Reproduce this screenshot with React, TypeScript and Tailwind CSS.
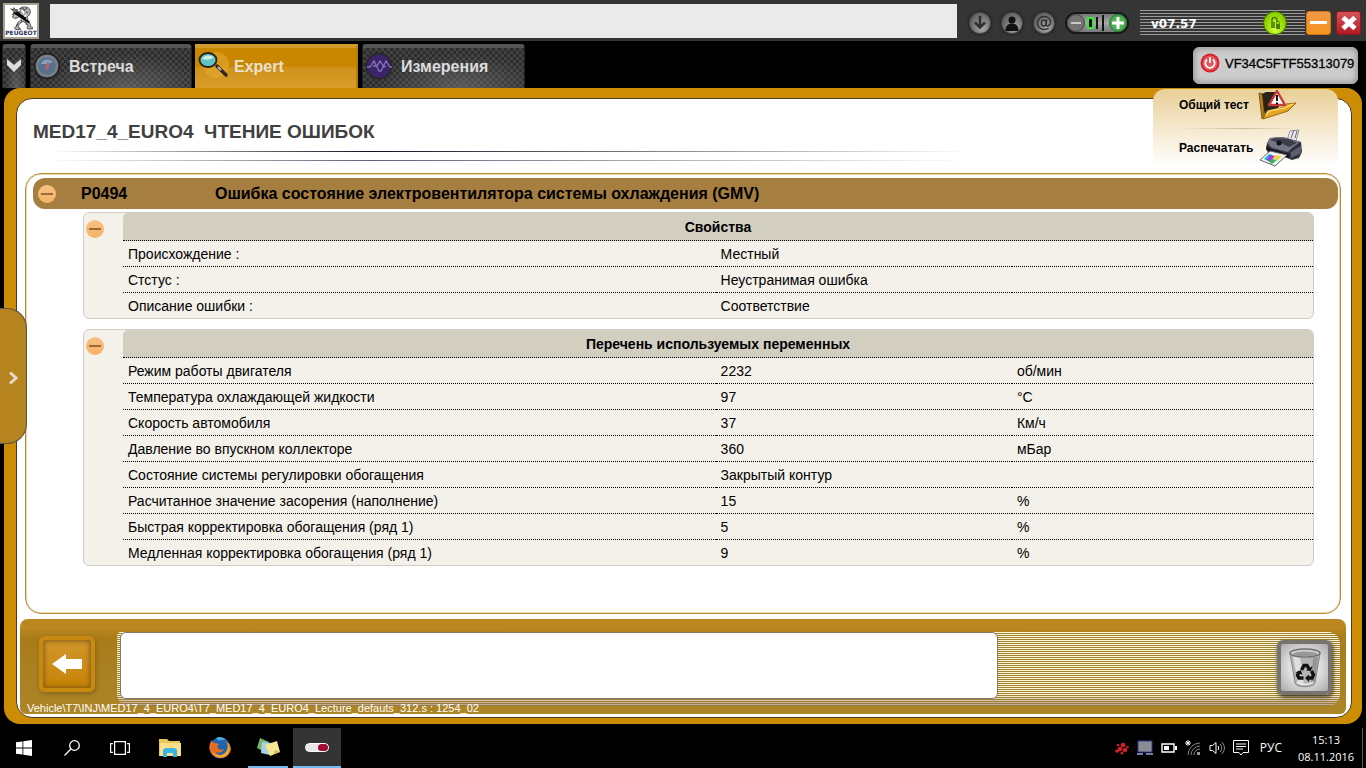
import { useState } from "react";
import type { ReactNode } from "react";

type Row = { name: string; value: string; unit?: string };

const properties: Row[] = [
  { name: "Происхождение :", value: "Местный" },
  { name: "Стстус :", value: "Неустранимая ошибка" },
  { name: "Описание ошибки :", value: "Соответствие" },
];

const variables: Row[] = [
  { name: "Режим работы двигателя", value: "2232", unit: "об/мин" },
  { name: "Температура охлаждающей жидкости", value: "97", unit: "°C" },
  { name: "Скорость автомобиля", value: "37", unit: "Км/ч" },
  { name: "Давление во впускном коллекторе", value: "360", unit: "мБар" },
  { name: "Состояние системы регулировки обогащения", value: "Закрытый контур" },
  { name: "Расчитанное значение засорения (наполнение)", value: "15", unit: "%" },
  { name: "Быстрая корректировка обогащения (ряд 1)", value: "5", unit: "%" },
  { name: "Медленная корректировка обогащения (ряд 1)", value: "9", unit: "%" },
];

function PeugeotLogo() {
  return (
    <div className="flex size-9 shrink-0 flex-col items-center border-2 border-[#a5a294] bg-white">
      <svg viewBox="0 0 44 44" className="mt-px h-6 w-6" aria-hidden="true">
        <path d="M19 6c2-4 8-5 13-4 5 1 8 5 7 10-1 4-3 6-6 8l2 7c3 3 5 6 4 10l4 2v3h-9l-1-3 2-2-3-5-6-4-6 4-3 4 1 4 3 1v2h-9l-2-3 4-3 3-7 5-6-1-6-6 4-5 1-4-3 2-2-2-3 3 1-1-4 4 2-1-4 4 3 6-4 2-5Z" fill="#b4b4b4" stroke="#3a3a3a" strokeWidth="1.500" strokeLinejoin="round" />
        <path d="M8 10 3 5l5 2 1-4 3 4 3-1 1 4 6 3" fill="#777" stroke="#444" strokeWidth="1.500" />
        <path d="m9 12 28 18M13 11l18 12" stroke="#080808" strokeWidth="3.500" />
        <path d="m25 3 3 5 5-4M31 10l4 3M20 22l4 7M30 27l3 8M16 31l-3 7" stroke="#555" strokeWidth="2" fill="none" />
        <path d="m22 8 4 2 1 4M32 17l-4 2M17 27l5-4" stroke="#fff" strokeWidth="2.500" fill="none" />
      </svg>
      <span className="font-['DejaVu_Sans'] text-[6px] leading-[6px] font-bold text-[#27315c]">PEUGEOT</span>
    </div>
  );
}

function RoundButton({ label, children }: { label: string; children: ReactNode }) {
  return (
    <button aria-label={label} className="flex size-[22px] items-center justify-center rounded-full border border-[#4d4d4d] bg-radial-[at_60%_75%] from-[#aaa] via-[#777] to-[#454545] text-[#303030] shadow-[0_0_2px_1px_#222]">
      {children}
    </button>
  );
}

function TopBar() {
  return (
    <header className="flex h-[41px] items-center bg-[#353535] pr-[5px] pl-[3px]">
      <PeugeotLogo />
      <input aria-label="Сообщение" className="ml-[11px] h-[34px] min-w-0 flex-1 bg-[#eaeaea] px-2 outline-none" />
      <div className="ml-3 flex shrink-0 items-center gap-[10px] pt-1">
        <RoundButton label="Загрузка">
          <svg viewBox="0 0 16 16" className="size-4 shrink-0" fill="none" stroke="currentColor" strokeWidth="2.6"><path d="M8 1v12M3 7.500 8 12.500 13 7.500" /></svg>
        </RoundButton>
        <RoundButton label="Пользователь">
          <svg viewBox="0 0 16 16" className="size-4 shrink-0" fill="#111"><circle cx="8" cy="5" r="3.500" /><path d="M1.500 16c0-5 2.500-7.500 6.500-7.500s6.500 2.500 6.500 7.500Z" /></svg>
        </RoundButton>
        <RoundButton label="Почта">
          <svg viewBox="0 0 16 16" className="size-4 shrink-0" fill="none" stroke="currentColor" strokeWidth="1.400"><ellipse cx="7.800" cy="8" rx="2.400" ry="3" /><path d="M10.700 4.500 10 10c0 2 4.500 1 4.500-3 0-3.500-3-5.500-6.500-5.500S1.500 4.500 1.500 8s2.500 6.500 6.500 6.500c2 0 3.500-.5 4.500-1.300" /></svg>
        </RoundButton>
      </div>
      <div className="mt-1 ml-[10px] flex h-[22px] w-16 shrink-0 items-center justify-between rounded-full border-2 border-[#181818] bg-linear-to-b from-[#777] via-[#aaa] to-[#777]">
        <button aria-label="Уменьшить" className="flex size-[18px] shrink-0 items-center justify-center rounded-full border border-[#444] bg-[#737373]"><span className="h-[2px] w-2.5 bg-[#c9c9c9]" /></button>
        <svg viewBox="0 0 20 18" className="h-[18px] w-5 shrink-0" aria-hidden="true"><rect x="1" y="4" width="5" height="10" fill="#111" stroke="#3ee43e" strokeWidth="2" /><path d="M10 3v12M16 1v16" stroke="#111" strokeWidth="2" /></svg>
        <button aria-label="Увеличить" className="flex size-[18px] shrink-0 items-center justify-center rounded-full border border-[#1e7d2c] bg-radial from-[#69c96b] to-[#36933d]"><svg viewBox="0 0 12 12" className="size-3 shrink-0" stroke="#fff" strokeWidth="3"><path d="M6 0v12M0 6h12" /></svg></button>
      </div>
      <div className="mt-1 ml-[11px] flex h-[26px] w-[165px] shrink-0 items-center justify-between bg-[repeating-linear-gradient(#9a9a9a_0_1px,#353535_1px_3px)] pr-[18px] pl-[11px]">
        <span className="pt-0.5 font-['DejaVu_Sans'] text-[12px] font-bold text-white">v07.57</span>
        <button aria-label="Доступ" className="flex size-6 items-center justify-center rounded-full border border-[#3d6e00] bg-radial-[at_50%_75%] from-[#d5ff4c] via-[#9be000] to-[#6dae00]">
          <svg viewBox="0 0 16 16" className="size-4" aria-hidden="true"><path d="M5 7V5a2.500 2.500 0 0 1 5 0v2" fill="none" stroke="#4c7800" strokeWidth="1.500" /><rect x="4" y="7" width="4" height="6" fill="#5a8f00" /><path d="M9 9h4v5H9Z" fill="#507d00" /><path d="M9.700 9V7.500a1.300 1.300 0 0 1 2.600 0V9" fill="none" stroke="#4c7800" /></svg>
        </button>
      </div>
      <button aria-label="Свернуть" className="mt-1 ml-px flex h-6 w-[25px] shrink-0 items-center justify-center rounded-[3px] border border-[#cf7517] bg-linear-to-b from-[#ee9a45] to-[#f7941e]"><span className="h-[3px] w-[17px] bg-white" /></button>
      <button aria-label="Закрыть" className="mt-1 ml-[5px] flex h-6 w-[25px] shrink-0 items-center justify-center rounded-[3px] border border-[#8c1a23] bg-linear-to-b from-[#d75159] to-[#b31621]">
        <svg viewBox="0 0 16 16" className="size-4" stroke="#fff" strokeWidth="4.800"><path d="m2 2.500 12 11M14 2.500 2 13.500" /></svg>
      </button>
    </header>
  );
}

function CarbonTab({ className, children }: { className: string; children: ReactNode }) {
  return (
    <button className={"flex items-center rounded-t-sm border-x border-t-4 border-x-[#222] border-t-[#555] bg-[radial-gradient(ellipse_at_60%_100%,#77777799,transparent_60%),repeating-conic-gradient(#2c2c2c_0_25%,#434343_0_50%)] bg-[size:auto,6px_6px] pb-1 text-[16px] font-bold text-[#dcdcdc] " + className}>
      {children}
    </button>
  );
}

function TabBar() {
  return (
    <nav className="flex h-[47px] items-stretch bg-black pt-[3px] pr-2 pl-0.5">
      <CarbonTab className="w-6 justify-center">
        <svg viewBox="0 0 16 14" className="h-3.5 w-4 shrink-0" aria-label="Список"><path d="M1 0 8 6 15 0V6L8 13 1 6Z" fill="#ddd" /></svg>
      </CarbonTab>
      <CarbonTab className="ml-1 w-[162px] gap-2 pl-0.5">
        <svg viewBox="0 0 28 28" className="size-7" aria-hidden="true"><circle cx="14" cy="14" r="12.500" fill="#343638" stroke="#222" strokeWidth="1.500" /><circle cx="14" cy="14" r="10" fill="#56708d" stroke="#7a8087" strokeWidth="2.500" /><path d="M8 12a7 7 0 0 1 12-2l-5 2Z" fill="#87a1ba" /><path d="m15 9 1.500 5L13 20l-.5-6Z" fill="#b56569" /></svg>
        <span className="pt-0.5 leading-5">Встреча</span>
      </CarbonTab>
      <button className="ml-[3px] flex w-[163px] items-center gap-1 border-t-4 border-r-2 border-t-[#d29a2b] border-r-[#b97d06] bg-linear-to-b from-[#c98700] from-45% via-[#cf921b] via-50% to-[#d89d28] pb-1 pl-[3px] text-[16px] font-bold text-[#e9e0cd]">
        <svg viewBox="0 0 32 30" className="h-[30px] w-8" aria-hidden="true"><circle cx="18" cy="14" r="13" fill="#e5a832" opacity=".6" /><path d="m19 15 9 9" stroke="#302b23" strokeWidth="3.500" strokeLinecap="round" /><path d="m20 16 3 3" stroke="#c3bca6" strokeWidth="2" /><ellipse cx="10" cy="9" rx="8.500" ry="7" fill="#65c2c4" stroke="#29251c" strokeWidth="1.800" /><path d="M4 8c2-4 9-5 12-1-3 0-4 3-12 1Z" fill="#c9f0e5" /></svg>
        <span className="pt-0.5 leading-5">Expert</span>
      </button>
      <CarbonTab className="ml-1 w-[163px] gap-2 pl-0.5">
        <svg viewBox="0 0 28 28" className="size-7" aria-hidden="true"><circle cx="14" cy="14" r="12.500" fill="#3c2268" stroke="#292929" strokeWidth="2" /><path d="m2 15 3 0 4-6 5 10 2 0 5-10 4 6h2M8 14h4l3-5 4 6 2-1" fill="none" stroke="#8177b8" strokeWidth="1.300" /></svg>
        <span className="pt-0.5 leading-5">Измерения</span>
      </CarbonTab>
      <button className="mt-[3px] mb-1 ml-auto flex w-[165px] items-center gap-[5px] rounded-md border border-[#aaa] bg-[#ccc] pb-[5px] pl-1.5 text-[13px] whitespace-nowrap text-black shadow-[inset_0_0_6px_#888]">
        <svg viewBox="0 0 20 20" className="size-5 shrink-0" aria-hidden="true"><circle cx="10" cy="10" r="9.500" fill="#d9222c" /><circle cx="10" cy="10" r="7.500" fill="#e0575d" /><path d="M7 6.500a4.700 4.700 0 1 0 6 0M10 4v6" fill="none" stroke="#fff" strokeWidth="1.700" /></svg>
        <span className="pt-px [-webkit-text-stroke:0.3px_black]">VF34C5FTF55313079</span>
      </button>
    </nav>
  );
}

function Collapse({ open, onToggle, label }: { open: boolean; onToggle: () => void; label: string }) {
  return (
    <button aria-label={label} aria-expanded={open} onClick={onToggle} className="flex size-[18px] shrink-0 items-center justify-center rounded-full bg-linear-to-b from-[#f8c184] to-[#f5b264]">
      <span className="h-[2px] w-3 bg-[#9a6b35]" />
    </button>
  );
}

function DataPanel({ title, rows }: { title: string; rows: Row[] }) {
  const [open, setOpen] = useState(true);
  return (
    <section className="flex rounded-md border border-[#cfcec4] bg-[#f4f1eb]">
      <div className="w-[39px] shrink-0 pt-[7px] pl-0.5">
        <Collapse open={open} onToggle={() => setOpen(!open)} label={title} />
      </div>
      <table className="w-full table-fixed border-separate border-spacing-0 text-[14px] leading-5 text-black">
        <colgroup>
          <col className="w-[49.8%]" />
          <col className="w-[24.9%]" />
          <col />
        </colgroup>
        <thead>
          <tr>
            <th colSpan={3} className="h-7 rounded-t-[5px] border-b border-dotted border-black bg-[#d2cfc1] p-0 text-center font-bold">{title}</th>
          </tr>
        </thead>
        {open && (
          <tbody className="[&>tr:last-child>td]:h-[25px] [&>tr:last-child>td]:border-b-0">
            {rows.map((r) => (
              <tr key={r.name}>
                <td className="h-[26px] border-b border-dotted border-black p-0 pl-[5px]">{r.name}</td>
                <td className="h-[26px] border-b border-dotted border-black p-0 pl-[5px]">{r.value}</td>
                <td className="h-[26px] border-b border-dotted border-black p-0 pl-[5px]">{r.unit}</td>
              </tr>
            ))}
          </tbody>
        )}
      </table>
    </section>
  );
}

function ActionMenu() {
  return (
    <div className="absolute top-px right-6 flex w-[185px] flex-col rounded-t-xl bg-linear-to-b from-[#e9cf96] via-[#f5e8cd] to-white pl-[26px] text-[12px] font-bold text-black">
      <button className="flex h-[39px] items-center gap-2 pb-2">
        Общий тест
        <svg viewBox="0 0 42 34" className="h-[34px] w-[42px]" aria-hidden="true"><path d="m2 5 4 1 1 22-2 3Z" fill="#b98218" stroke="#7d5811" /><path d="m5 6 4-2 12 0 1 15L8 29Z" fill="#29231a" /><path d="m6 31 4-8 17-4 2-3 10-1-8 8Z" fill="#e3a524" stroke="#9b6b11" /><path d="m9 27 3-4 15-3 9-4" stroke="#ffd765" strokeWidth="1.500" fill="none" /><path d="m20 3 8 14H12Z" fill="#fff" stroke="#c43c38" strokeWidth="2.500" strokeLinejoin="round" /><path d="M20 7v6M20 14.500v2" stroke="#111" strokeWidth="2" /></svg>
      </button>
      <div className="mr-9 h-px bg-linear-to-r from-transparent via-[#cbbd9e] to-transparent" />
      <button className="flex h-[38px] items-center gap-1.5">
        Распечатать
        <svg viewBox="0 0 46 38" className="h-[38px] w-[46px]" aria-hidden="true"><path d="m28 11 3-9 9-1-3 11" fill="#e9e9ef" stroke="#92949e" /><path d="m32 9 3-8M36 9l2-7" stroke="#62646b" /><path d="m8 14 3-5 13-1 18 5 1 10-3 6-7 2-19-8-7-2Z" fill="#30313c" /><path d="m8 14 3-5 13-1 17 5-8 6-4 4-16-4Z" fill="#747685" /><path d="m11 11 5-2 14 1 8 4-8 4-6-3Z" fill="#3c3d4a" /><circle cx="20" cy="14" r="2.500" fill="#11121b" /><path d="m7 17 5 3 18 5v4L9 24Z" fill="#13141b" /><path d="m1 31 10-9 17 4-12 11Z" fill="#f3f4f7" stroke="#63656f" /><path d="m5 30 5-5 4 1-5 6Z" fill="#11b9df" /><path d="m11 26 5 1-5 6-3-2Z" fill="#ac36d6" /><path d="m16 26 7 1-4 4-4-1Z" fill="#efd339" /><path d="m13 30 5 1-5 4-3-2Z" fill="#34b84e" /><path d="m32 23 10-6v7L32 29Z" fill="#5d5f6d" /></svg>
      </button>
    </div>
  );
}

function BottomPanel() {
  return (
    <footer className="mr-[5px] mb-[3px] ml-0.5 rounded-lg rounded-b-md bg-linear-to-b from-[#ba8721] from-10% via-[#a97c1a] via-20% to-[#ac8527] pt-[13px] pr-1.5 pl-[7px]">
      <div className="flex h-[74px]">
        <button aria-label="Назад" className="mt-1 ml-3 flex size-14 shrink-0 items-center justify-center rounded-md border-4 border-[#c78a0f] bg-linear-to-b from-[#d1972a] to-[#c68300] shadow-[inset_0_0_5px_1px_#805716,1px_2px_4px_#5c481a80]">
          <svg viewBox="0 0 30 20" className="h-5 w-[30px]"><path d="M0 10 14 0V5H30V15H14V20Z" fill="#fff" /></svg>
        </button>
        <div className="ml-[22px] flex min-w-0 flex-1 items-start rounded-xl rounded-tl-sm bg-[linear-gradient(transparent_85%,#93785499_97%),repeating-linear-gradient(#fff6dc_0_1px,#a1822f_1px_2px)] pl-[3px]">
          <output className="h-[67px] w-[72%] rounded-md border border-[#86796a] bg-white" />
          <button aria-label="Очистить" className="mt-2 mr-2 ml-auto flex size-[55px] items-center justify-center rounded-md border-4 border-[#77736e] bg-radial from-white via-[#ddd] to-[#aaa] shadow-[1px_2px_4px_#3d3420]">
            <svg viewBox="0 0 36 42" className="h-[42px] w-9 shrink-0" aria-hidden="true"><path d="m3 6 5 30c1 5 19 5 20 0l5-30Z" fill="#b5b5b5" stroke="#858585" /><path d="m6 10 5 25c2 2 4 3 6 3L13 10Z" fill="#dedede" /><path d="m26 10-2 26 4-2 3-24Z" fill="#777" opacity=".5" /><path d="M10 35c3 3 13 3 16 0" fill="none" stroke="#eee" strokeWidth="1.500" /><ellipse cx="18" cy="6" rx="15" ry="4" fill="#d0d0d0" stroke="#6f6f6f" strokeWidth="1.500" /><ellipse cx="18" cy="7" rx="12" ry="2.500" fill="#989898" /><g fill="none" stroke="#111" strokeWidth="3.400"><path d="m14.500 23 2.500-4.500h3l2 3.500" /><path d="m24.500 24 2 4-1.500 3h-4.500" /><path d="M16.500 31h-4.500l-1.500-3 2-3.500" /></g><path d="m19 23.500 5 .5 1.500-5ZM22 27.500v7.500l-4-4ZM8.500 25.500l5.500-2.500 1.500 5Z" fill="#111" /></svg>
          </button>
        </div>
      </div>
      <p className="-mt-1 text-[11px] leading-3 whitespace-nowrap text-white">Vehicle\T7\INJ\MED17_4_EURO4\T7_MED17_4_EURO4_Lecture_defauts_312.s : 1254_02</p>
    </footer>
  );
}

function Taskbar() {
  return (
    <footer className="mt-1 flex h-10 items-stretch bg-black font-['Open_Sans','Noto_Sans',sans-serif] text-[12px] text-white">
      <button aria-label="Пуск" className="flex w-12 items-center justify-center"><svg viewBox="0 0 16 16" className="size-4" fill="#fff"><path d="M0 2.300 6.500 1.400V7.600H0ZM7.300 1.300 16 0V7.600H7.300ZM0 8.400H6.500V14.600L0 13.700ZM7.300 8.400H16V16L7.300 14.700Z" /></svg></button>
      <button aria-label="Поиск" className="flex w-12 items-center justify-center"><svg viewBox="0 0 16 16" className="size-4" fill="none" stroke="#fff" strokeWidth="1.300"><circle cx="10.500" cy="5.500" r="4.800" /><path d="M7 9 .5 15.500" /></svg></button>
      <button aria-label="Представление задач" className="flex w-12 items-center justify-center"><svg viewBox="0 0 20 16" className="h-4 w-5" fill="none" stroke="#fff" strokeWidth="1.200"><path d="M4.600 1.600h10.800v12.800H4.600ZM3 3.600H.6v8.800H3M17 3.600h2.400v8.800H17" /></svg></button>
      <button aria-label="Проводник" className="flex w-[51px] items-center justify-center"><svg viewBox="0 0 22 18" className="h-[18px] w-[22px]"><path d="M0 0h8l2 2h11v15H0Z" fill="#eac45c" /><path d="M1 4h21v13H1Z" fill="#fadf88" /><path d="M4 18v-7l2-2h10l2 2v7h-4v-4H8v4Z" fill="#38b5e6" /></svg></button>
      <button aria-label="Firefox" className="flex w-[49px] items-center justify-center"><svg viewBox="0 0 24 24" className="size-6"><circle cx="12" cy="12" r="10.500" fill="#1d65ad" /><path d="M4 4c0 2 1 2 3 3l4 1-2 3 3 3 4-1c-1 4-7 5-9 2 3 7 13 5 13-3 0-3-1-5-3-7 5 2 6 6 6 9A11 11 0 1 1 4 4Z" fill="#e96c20" /><path d="M20 7c3 4 2 11-2 13-6 4-13 0-14-5 3 5 12 6 15-1 1-3 1-5 1-7Z" fill="#f6a72b" /><path d="M8 2c3-2 8-1 10 2-3-1-5 1-8 0Z" fill="#52a9de" /></svg></button>
      <button aria-label="Заметки" className="mx-1 flex w-10 items-center justify-center border-b-2 border-[#76b9ed]"><svg viewBox="0 0 24 20" className="h-5 w-6"><path d="m4 1 9 4-4 10-8-4Z" fill="#72b96c" /><path d="m6 5 10 1-2 12-9-2Z" fill="#a9d0e7" /><path d="m9 8 12-4 3 11-10 4Z" fill="#f5e690" /><path d="m18 17 1-4 5 2Z" fill="#d4ba50" /></svg></button>
      <button aria-label="Диагностика" className="ml-px flex w-12 items-center justify-center border-b-2 border-[#76b9ed] bg-[#343434]"><span className="flex h-[9px] w-6 justify-end rounded-full border border-white bg-[#e8e8e8]"><span className="w-2.5 rounded-full bg-[#a30b32]" /></span></button>
      <div className="ml-auto flex items-center gap-2">
        <svg viewBox="0 0 14 14" className="size-3.5" aria-label="Служба"><g fill="#d2202a"><circle cx="8" cy="4" r="2.300" /><circle cx="5" cy="8" r="2.300" /><circle cx="10" cy="9" r="2.300" /><circle cx="2" cy="10" r="1.800" /><circle cx="12.500" cy="6" r="1.300" /><circle cx="3" cy="4" r="1.300" /><circle cx="7" cy="12" r="1.500" /></g></svg>
        <svg viewBox="0 0 16 16" className="size-4" aria-label="Компьютер"><path d="M1 1h14v11H1Z" fill="#8a8c91" stroke="#2f3c92" /><path d="M0 14h6M9 14h7" stroke="#777ca9" strokeWidth="2" /></svg>
        <svg viewBox="0 0 16 16" className="size-4" aria-label="Батарея"><path d="M1 4h12v8H1Z" fill="none" stroke="#fff" strokeWidth="1.400" /><path d="M3 6h5v4H3ZM14 6h2v4h-2Z" fill="#fff" /></svg>
        <svg viewBox="0 0 16 16" className="size-4" fill="none" aria-label="Сеть"><path d="M3 0v6M0 3h6M1 1l4 4M5 1 1 5" stroke="#fff" /><path d="M3 15A12 12 0 0 1 15 3M6 15a9 9 0 0 1 9-9M9 15a6 6 0 0 1 6-6" stroke="#888" /><path d="M12 15v-3h3v3Z" fill="#999" /></svg>
        <svg viewBox="0 0 16 16" className="size-4" fill="none" aria-label="Звук"><path d="M1 5.500h2.500L7 2.500v11l-3.500-3H1Z" stroke="#fff" /><path d="M9 6q1.500 2 0 4" stroke="#fff" /><path d="M11 4q3.500 4 0 8M13 2q5 6 0 12" stroke="#888" /></svg>
        <svg viewBox="0 0 16 16" className="size-4" fill="none" stroke="#fff" aria-label="Уведомления"><path d="M.5.5h15v12H10L8 15l-2-2.500H.5ZM3 4h10M3 6.500h10M3 9h7" /></svg>
        <button className="ml-[3px]">РУС</button>
        <button className="ml-2 w-[56px] text-center text-[11px] leading-[17px] whitespace-nowrap">15:13<br />08.11.2016</button>
        <span className="h-full border-l border-[#555] pr-[3px]" />
      </div>
    </footer>
  );
}

export default function App() {
  const [open, setOpen] = useState(true);
  return (
    <div className="flex min-h-screen flex-col bg-black font-['Liberation_Sans',Arial,sans-serif]">
      <TopBar />
      <TabBar />
      <main className="relative mr-1 ml-1 flex flex-1 flex-col rounded-2xl bg-[#cc8c03] pt-2.5 pr-2.5 pb-1.5 pl-3">
        <ActionMenu />
        <button aria-label="Открыть панель" className="absolute top-[220px] -left-1 flex h-[136px] w-[27px] items-center justify-end rounded-r-[20px] border border-l-0 border-[#585043] bg-[#b5841f] pt-1 pr-2">
          <svg viewBox="0 0 9 14" className="h-3.5 w-[9px]" fill="none" stroke="#e2dbc9" strokeWidth="3"><path d="m1 1.500 6 5.500-6 5.500" /></svg>
        </button>
        <div className="flex flex-1 flex-col rounded-2xl border border-[#4a3a22] bg-white pl-px">
          <div className="h-[74px] pt-[21px] pl-[15px]">
            <h1 className="text-[19px] leading-6 font-bold whitespace-pre text-[#404040]">{"MED17_4_EURO4  ЧТЕНИЕ ОШИБОК"}</h1>
            <div className="mt-[7px] ml-4 h-px w-[70%] bg-linear-to-r from-transparent via-[#111122] via-35% to-transparent" />
            <div className="mt-2 ml-4 h-px w-[70%] bg-linear-to-r from-transparent via-[#666075] via-35% to-transparent" />
          </div>
          <div className="mr-2.5 mb-[5px] ml-[7px] flex-1 rounded-2xl border border-[#b98b35] pt-1 pr-0.5 pb-4 pl-[7px] shadow-[inset_0_0_0_1px_#ead9b0]">
            <div className="flex h-[31px] items-center rounded-xl bg-[#a67e3f] pl-[5px] text-[16px] font-bold text-black">
              <Collapse open={open} onToggle={() => setOpen(!open)} label="P0494" />
              <span className="ml-[25px] w-[134px]">P0494</span>
              <span>Ошибка состояние электровентилятора системы охлаждения (GMV)</span>
            </div>
            {open && (
              <div className="mt-[3px] mr-6 ml-[50px] flex flex-col gap-2.5">
                <DataPanel title="Свойства" rows={properties} />
                <DataPanel title="Перечень используемых переменных" rows={variables} />
              </div>
            )}
          </div>
          <BottomPanel />
        </div>
      </main>
      <Taskbar />
    </div>
  );
}
